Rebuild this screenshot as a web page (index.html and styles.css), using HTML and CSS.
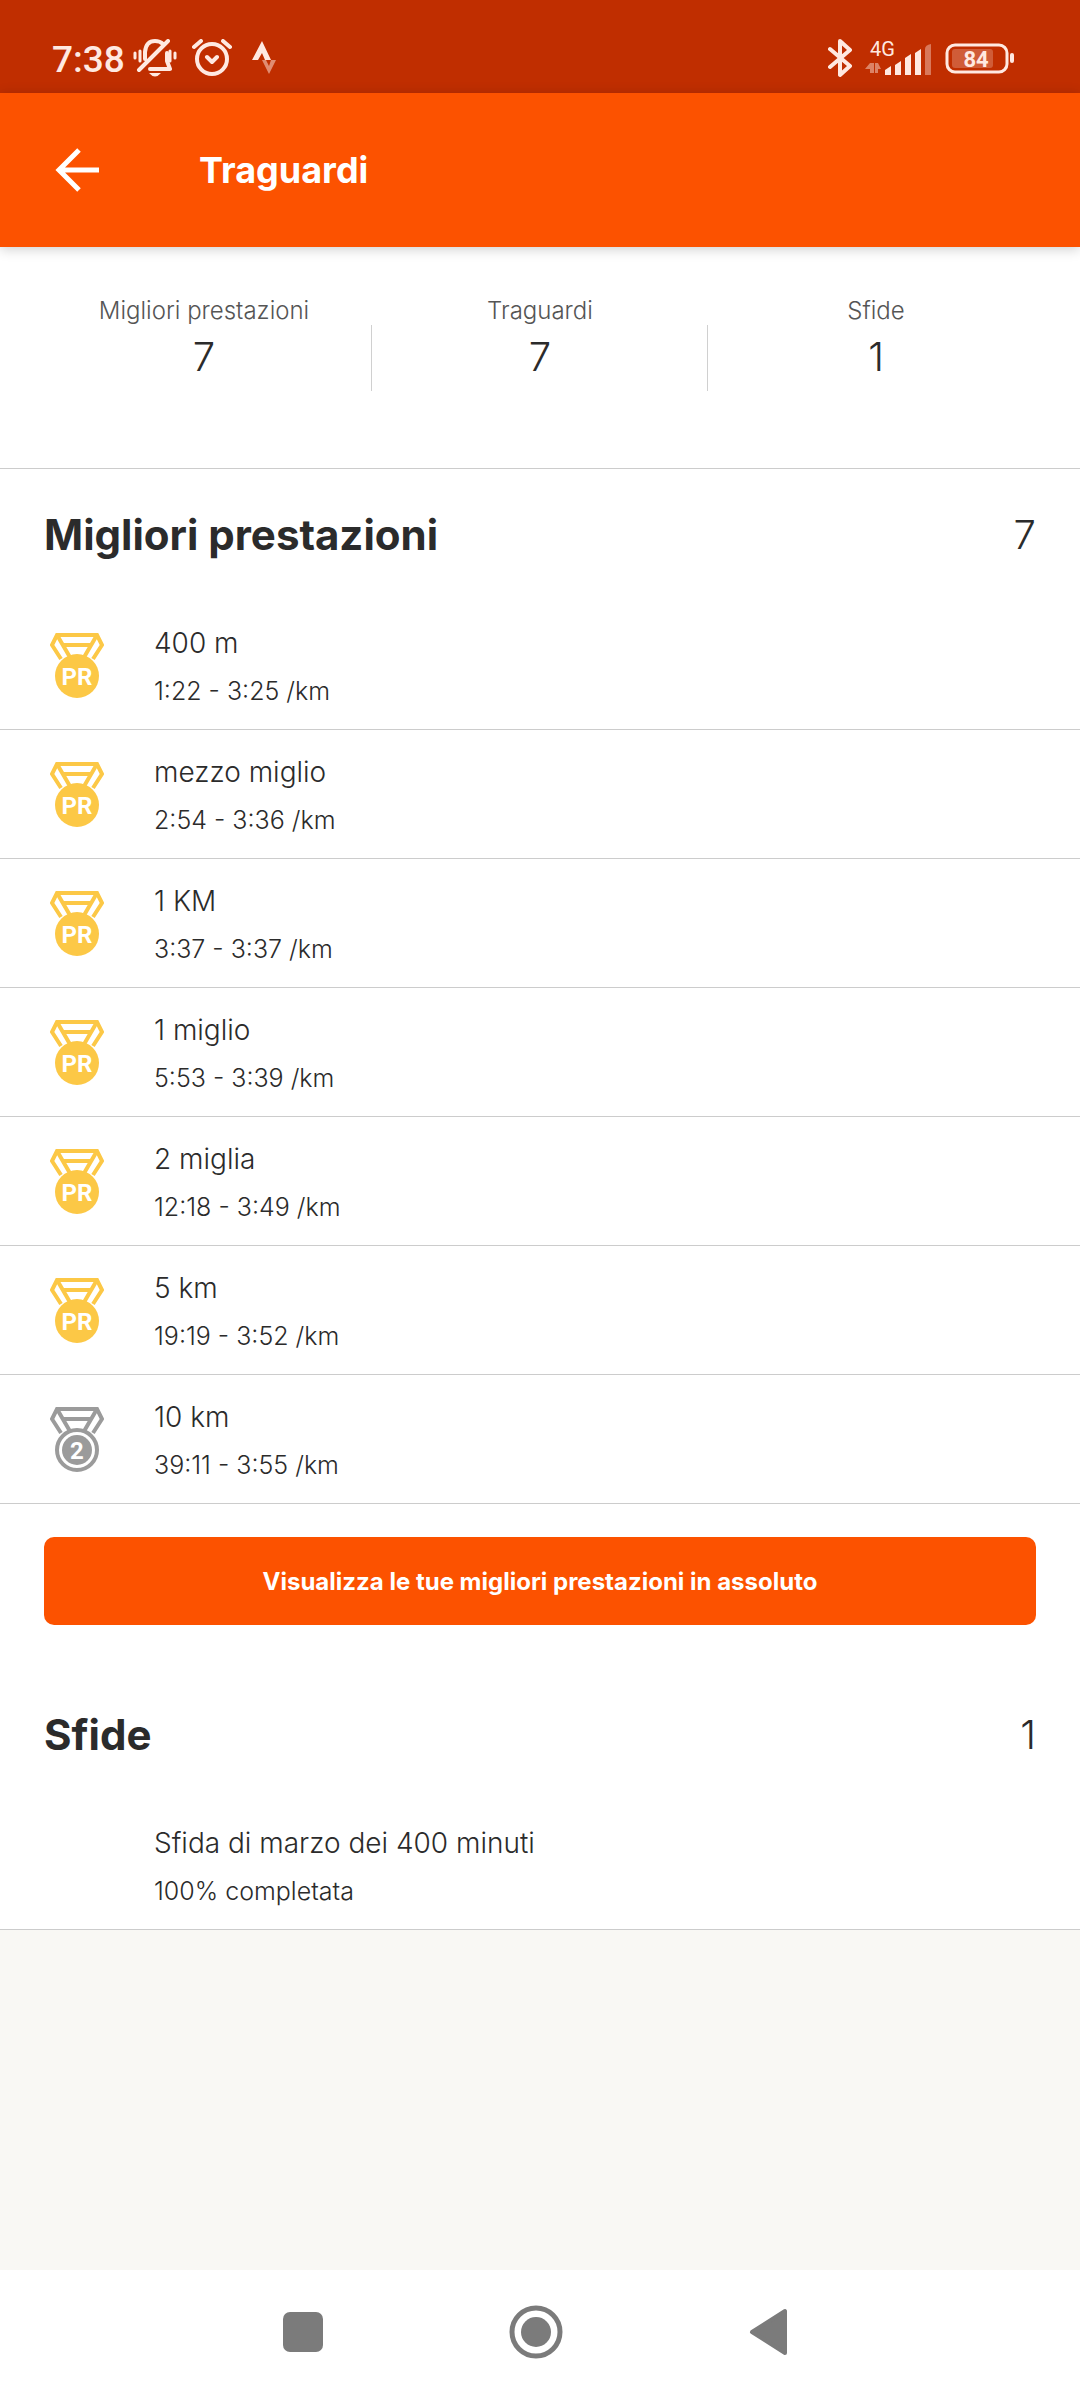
FILE: index.html
```html
<!DOCTYPE html>
<html lang="it">
<head>
<meta charset="utf-8">
<meta name="viewport" content="width=device-width, initial-scale=1">
<title>Traguardi</title>
<link rel="stylesheet" href="styles.css">
</head>
<body>
<svg width="0" height="0" class="defs" aria-hidden="true">
  <defs>
    <g id="ribbon" fill="none" stroke="currentColor" stroke-width="4">
      <path d="M11 26 2 12 7 2H47L52 12 43 26"/>
      <path d="M7 2 21 26M47 2 33 26M13 12H41"/>
    </g>
    <symbol id="medal-pr" viewBox="0 0 54 66">
      <use href="#ribbon"/>
      <circle cx="27" cy="43" r="22" fill="currentColor"/>
      <text x="27" y="52" class="medal-text">PR</text>
    </symbol>
    <symbol id="medal-2" viewBox="0 0 54 66">
      <use href="#ribbon"/>
      <circle cx="27" cy="43" r="20" fill="#fff" stroke="currentColor" stroke-width="4"/>
      <circle cx="27" cy="43" r="15" fill="currentColor"/>
      <text x="27" y="52" class="medal-text">2</text>
    </symbol>
  </defs>
</svg>
<div class="screen">
  <div class="status">
    <div class="status-left">
      <span class="time">7:38</span>
      <svg width="44" height="38" viewBox="0 0 44 38" fill="none" stroke="currentColor" stroke-width="4" stroke-linecap="round" stroke-linejoin="round">
        <path d="M12 20V13Q13 2 22 2Q27 2 30 5M34 14V22L37 30H17M6 31 35 2"/>
        <path d="M2 14V19M7 12V22M37 12V22M42 14V19" stroke-width="3"/>
        <path d="M16 34H28Q22 41 16 34Z" fill="currentColor" stroke="none"/>
      </svg>
      <svg class="alarm" width="40" height="38" viewBox="0 0 40 38" fill="none" stroke="currentColor" stroke-width="4" stroke-linecap="round" stroke-linejoin="round">
        <circle cx="20" cy="20" r="15"/><path d="M2 8 9 2M31 2 38 8M15 18 20 23 25 18"/>
      </svg>
      <svg class="strava" width="24" height="34" viewBox="0 0 24 34" fill="currentColor">
        <path d="M10 0 19 19H13L10 12 6 19H0Z"/><path opacity=".5" d="M10 19H14L17 25 19 19H24L17 33Z"/>
      </svg>
    </div>
    <div class="status-right">
      <svg width="24" height="40" viewBox="0 0 24 40" fill="none" stroke="currentColor" stroke-width="4" stroke-linecap="round" stroke-linejoin="round"><path d="M2 11 22 28 12 37V3L22 12 2 29"/></svg>
      <svg class="signal" width="68" height="50" viewBox="0 -6 68 50" fill="currentColor">
        <text x="5" y="17" class="network">4G</text>
        <path opacity=".45" d="M5 24V34H9V24ZM0 30 5 24V30ZM10 24H13V34H10ZM13 24 16 30H13Z"/>
        <path d="M20 31 26 27V36H20ZM30 26 36 22V36H30ZM40 19 46 15V36H40ZM50 14 56 10V36H50Z"/>
        <path opacity=".4" d="M60 10Q60 6 66 5V36H60Z"/>
      </svg>
      <svg class="battery" width="70" height="32" viewBox="0 0 70 32">
        <rect x="2" y="3" width="60" height="27" rx="8" fill="none" stroke="currentColor" stroke-width="3"/>
        <rect x="7" y="7" width="41" height="19" rx="3" fill="currentColor" opacity=".25"/>
        <rect x="65" y="11" width="4" height="10" rx="2" fill="currentColor"/>
        <text x="31" y="25" class="charge">84</text>
      </svg>
    </div>
  </div>
  <header class="appbar">
    <button class="back" aria-label="Indietro"><svg width="44" height="44" viewBox="0 0 44 44" fill="none" stroke="currentColor" stroke-width="5"><path d="M24 2 4 22 24 42M4 22H44"/></svg></button>
    <h1>Traguardi</h1>
  </header>
  <main>
    <dl class="stats">
      <div><dt>Migliori prestazioni</dt><dd>7</dd></div>
      <div><dt>Traguardi</dt><dd>7</dd></div>
      <div><dt>Sfide</dt><dd>1</dd></div>
    </dl>
    <section>
      <div class="section-head"><h2>Migliori prestazioni</h2><span>7</span></div>
      <ul>
        <li><svg class="medal gold"><use href="#medal-pr"/></svg><div><h3>400 m</h3><p>1:22 - 3:25 /km</p></div></li>
        <li><svg class="medal gold"><use href="#medal-pr"/></svg><div><h3>mezzo miglio</h3><p>2:54 - 3:36 /km</p></div></li>
        <li><svg class="medal gold"><use href="#medal-pr"/></svg><div><h3>1 KM</h3><p>3:37 - 3:37 /km</p></div></li>
        <li><svg class="medal gold"><use href="#medal-pr"/></svg><div><h3>1 miglio</h3><p>5:53 - 3:39 /km</p></div></li>
        <li><svg class="medal gold"><use href="#medal-pr"/></svg><div><h3>2 miglia</h3><p>12:18 - 3:49 /km</p></div></li>
        <li><svg class="medal gold"><use href="#medal-pr"/></svg><div><h3>5 km</h3><p>19:19 - 3:52 /km</p></div></li>
        <li><svg class="medal silver"><use href="#medal-2"/></svg><div><h3>10 km</h3><p>39:11 - 3:55 /km</p></div></li>
      </ul>
      <div class="action"><button class="primary">Visualizza le tue migliori prestazioni in assoluto</button></div>
    </section>
    <section>
      <div class="section-head"><h2>Sfide</h2><span>1</span></div>
      <ul>
        <li><span class="medal"></span><div><h3>Sfida di marzo dei 400 minuti</h3><p>100% completata</p></div></li>
      </ul>
    </section>
  </main>
  <nav class="navbar">
    <button aria-label="Recenti"><svg width="56" height="56" viewBox="0 0 56 56" fill="currentColor"><rect x="8" y="8" width="40" height="40" rx="7"/></svg></button>
    <button aria-label="Home"><svg width="56" height="56" viewBox="0 0 56 56"><circle cx="28" cy="28" r="24" fill="none" stroke="currentColor" stroke-width="5"/><circle cx="28" cy="28" r="15" fill="currentColor"/></svg></button>
    <button aria-label="Indietro"><svg width="56" height="56" viewBox="0 0 56 56" fill="currentColor" stroke="currentColor" stroke-width="4" stroke-linejoin="round"><path d="M11 28 44 7V49Z"/></svg></button>
  </nav>
</div>
</body>
</html>
```
FILE: styles.css
```css
* { box-sizing: border-box; }
body, h1, h2, h3, p, ul, dl, dd { margin: 0; padding: 0; }
body { font-family: Inter, "Liberation Sans", sans-serif; color: #2b2b2b; background: #f9f8f4; }
button { border: 0; padding: 0; font: inherit; color: inherit; background: none; }
svg { display: block; flex: none; }
.defs { position: absolute; }
.screen { min-height: 100vh; display: flex; flex-direction: column; }

.status { height: 93px; padding: 22px 65px 0 52px; display: flex; align-items: center; justify-content: space-between; background: #c02e00; color: #ffe9e1; font-family: Roboto, sans-serif; }
.status-left, .status-right { display: flex; align-items: center; }
.time { font-size: 37px; font-weight: 500; line-height: 40px; padding-top: 4px; margin-right: 8px; }
.alarm { margin-left: 15px; }
.strava { margin-left: 20px; }
.signal { margin-left: 13px; }
.battery { margin-left: 12px; }
.network { font-size: 20px; }
.charge { font-size: 22px; font-weight: 700; text-anchor: middle; fill: currentColor; }

.appbar { height: 154px; padding: 0 55px; display: flex; align-items: center; gap: 100px; position: relative; background: #fc5200; color: #fff; box-shadow: 0 2px 12px rgba(0, 0, 0, .2); }
h1 { font-size: 36px; line-height: 48px; font-weight: 700; }

main { flex: 1; }
.stats { display: flex; padding: 44px 36px 77px; background: #fff; border-bottom: 1px solid #ccc; }
.stats > div { flex: 1; height: 100px; padding-top: 2px; text-align: center; background: linear-gradient(#d0d0d0, #d0d0d0) right bottom / 1px 66px no-repeat; }
.stats > div:last-child { background: none; }
dt { font-size: 24px; line-height: 36px; color: #555; font-weight: 350; }
dd { font-size: 40px; line-height: 56px; font-weight: 350; }

section { background: #fff; }
.section-head { height: 132px; padding: 0 44px; display: flex; align-items: center; justify-content: space-between; }
h2 { font-size: 42px; line-height: 56px; font-weight: 700; }
.section-head span { font-size: 40px; line-height: 56px; font-weight: 350; }
ul { list-style: none; }
li { height: 129px; padding: 22px 50px 0; display: flex; gap: 50px; border-bottom: 1px solid #ccc; }
h3 { font-size: 28px; line-height: 40px; font-weight: 350; }
li p { font-size: 25px; line-height: 32px; margin-top: 12px; font-weight: 350; }
.medal { width: 54px; height: 66px; margin-top: 10px; }
.gold { color: #fcc846; }
.silver { color: #9b9b9b; }
.medal-text { fill: #fff; font: 700 24px Roboto, sans-serif; text-anchor: middle; }
.action { padding: 33px 44px 44px; }
.primary { width: 100%; height: 88px; border-radius: 10px; background: #fc5200; color: #fff; font-size: 24px; font-weight: 700; }

.navbar { height: 130px; padding: 0 8px 6px 0; display: flex; justify-content: center; align-items: center; gap: 177px; background: #fff; color: #7b7b7b; }
```
